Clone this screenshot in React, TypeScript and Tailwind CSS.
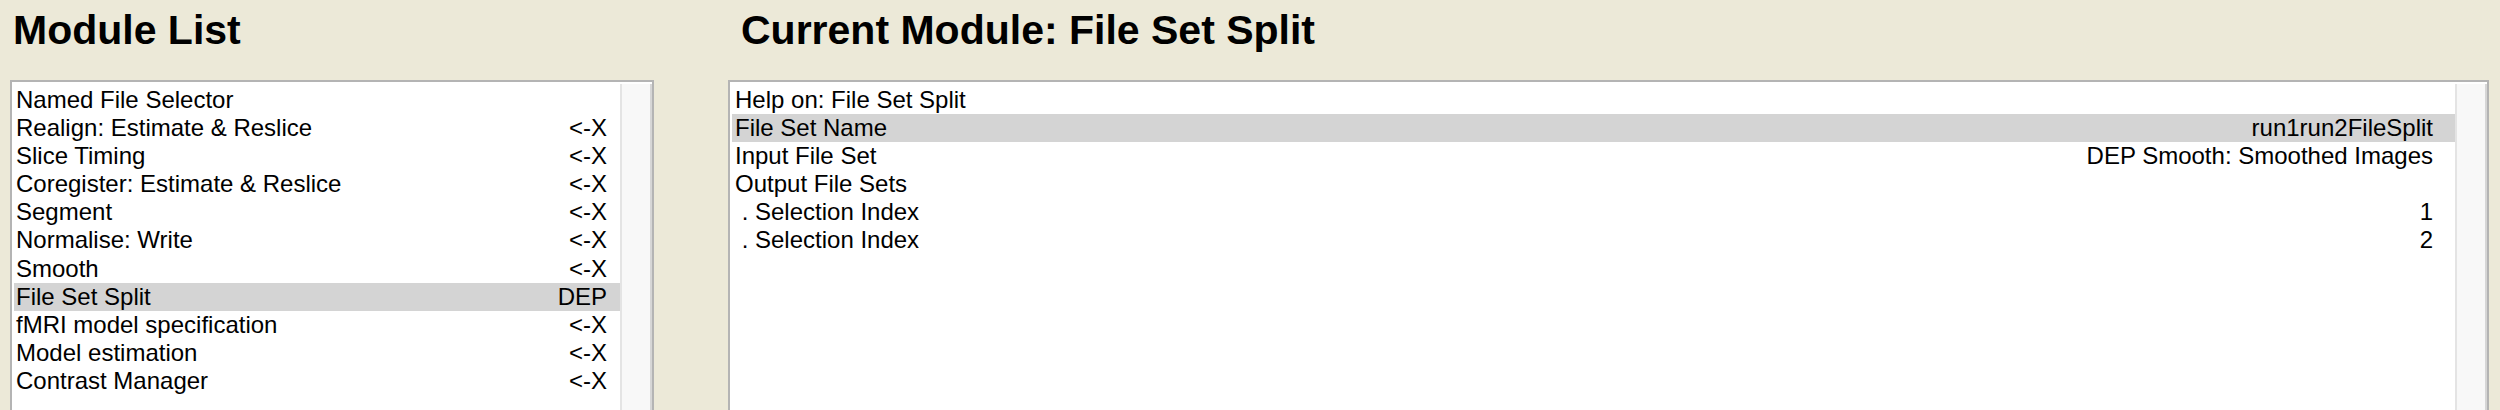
import { FC } from 'react';

type Row = {
    label: string;
    value?: string;
    selected?: boolean;
};

const modules: Row[] = [
    { label: 'Named File Selector' },
    { label: 'Realign: Estimate & Reslice', value: '<-X' },
    { label: 'Slice Timing', value: '<-X' },
    { label: 'Coregister: Estimate & Reslice', value: '<-X' },
    { label: 'Segment', value: '<-X' },
    { label: 'Normalise: Write', value: '<-X' },
    { label: 'Smooth', value: '<-X' },
    { label: 'File Set Split', value: 'DEP', selected: true },
    { label: 'fMRI model specification', value: '<-X' },
    { label: 'Model estimation', value: '<-X' },
    { label: 'Contrast Manager', value: '<-X' },
];

const current: Row[] = [
    { label: 'Help on: File Set Split' },
    { label: 'File Set Name', value: 'run1run2FileSplit', selected: true },
    { label: 'Input File Set', value: 'DEP Smooth: Smoothed Images' },
    { label: 'Output File Sets' },
    { label: ' . Selection Index', value: '1' },
    { label: ' . Selection Index', value: '2' },
];

const ListBox: FC<{ rows: Row[]; valuePad: string; labelPad: string }> = ({ rows, valuePad, labelPad }) => {
    return (
        <div className="mt-[29px] h-[340px] shrink-0 flex border-2 border-[#b4b4b4] bg-white pt-[2px] pl-[2px]">
            <ul className="flex-1 min-w-0 pt-[2px]">
                {rows.map((row, i) => (
                    <li
                        key={i}
                        className={`h-[28.1px] leading-[28.1px] flex justify-between whitespace-pre ${labelPad} ${valuePad} ${
                            row.selected ? 'bg-[#d4d4d4]' : ''
                        }`}
                    >
                        <span>{row.label}</span>
                        {row.value && <span>{row.value}</span>}
                    </li>
                ))}
            </ul>
            <div className="w-[32px] shrink-0 bg-[#f8f8f8] border-l-2 border-r-2 border-l-[#e4e4e4] border-r-[#d6d6d6]" />
        </div>
    );
};

export default function App() {
    return (
        <div className="h-[410px] overflow-hidden bg-[#ece9d8] flex pl-[10px] pr-[11px] gap-[74px] font-['Liberation_Sans',Arial,sans-serif] text-[24px] text-black">
            <div className="w-[644px] shrink-0 flex flex-col">
                <h1 className="mt-[10px] ml-[3px] text-[41px] leading-[41px] font-bold">Module List</h1>
                <ListBox rows={modules} labelPad="pl-[2px]" valuePad="pr-[13px]" />
            </div>
            <div className="flex-1 min-w-0 flex flex-col">
                <h1 className="mt-[10px] ml-[13px] text-[41px] leading-[41px] font-bold">
                    Current Module: File Set Split
                </h1>
                <ListBox rows={current} labelPad="pl-[3px]" valuePad="pr-[22px]" />
            </div>
        </div>
    );
}
